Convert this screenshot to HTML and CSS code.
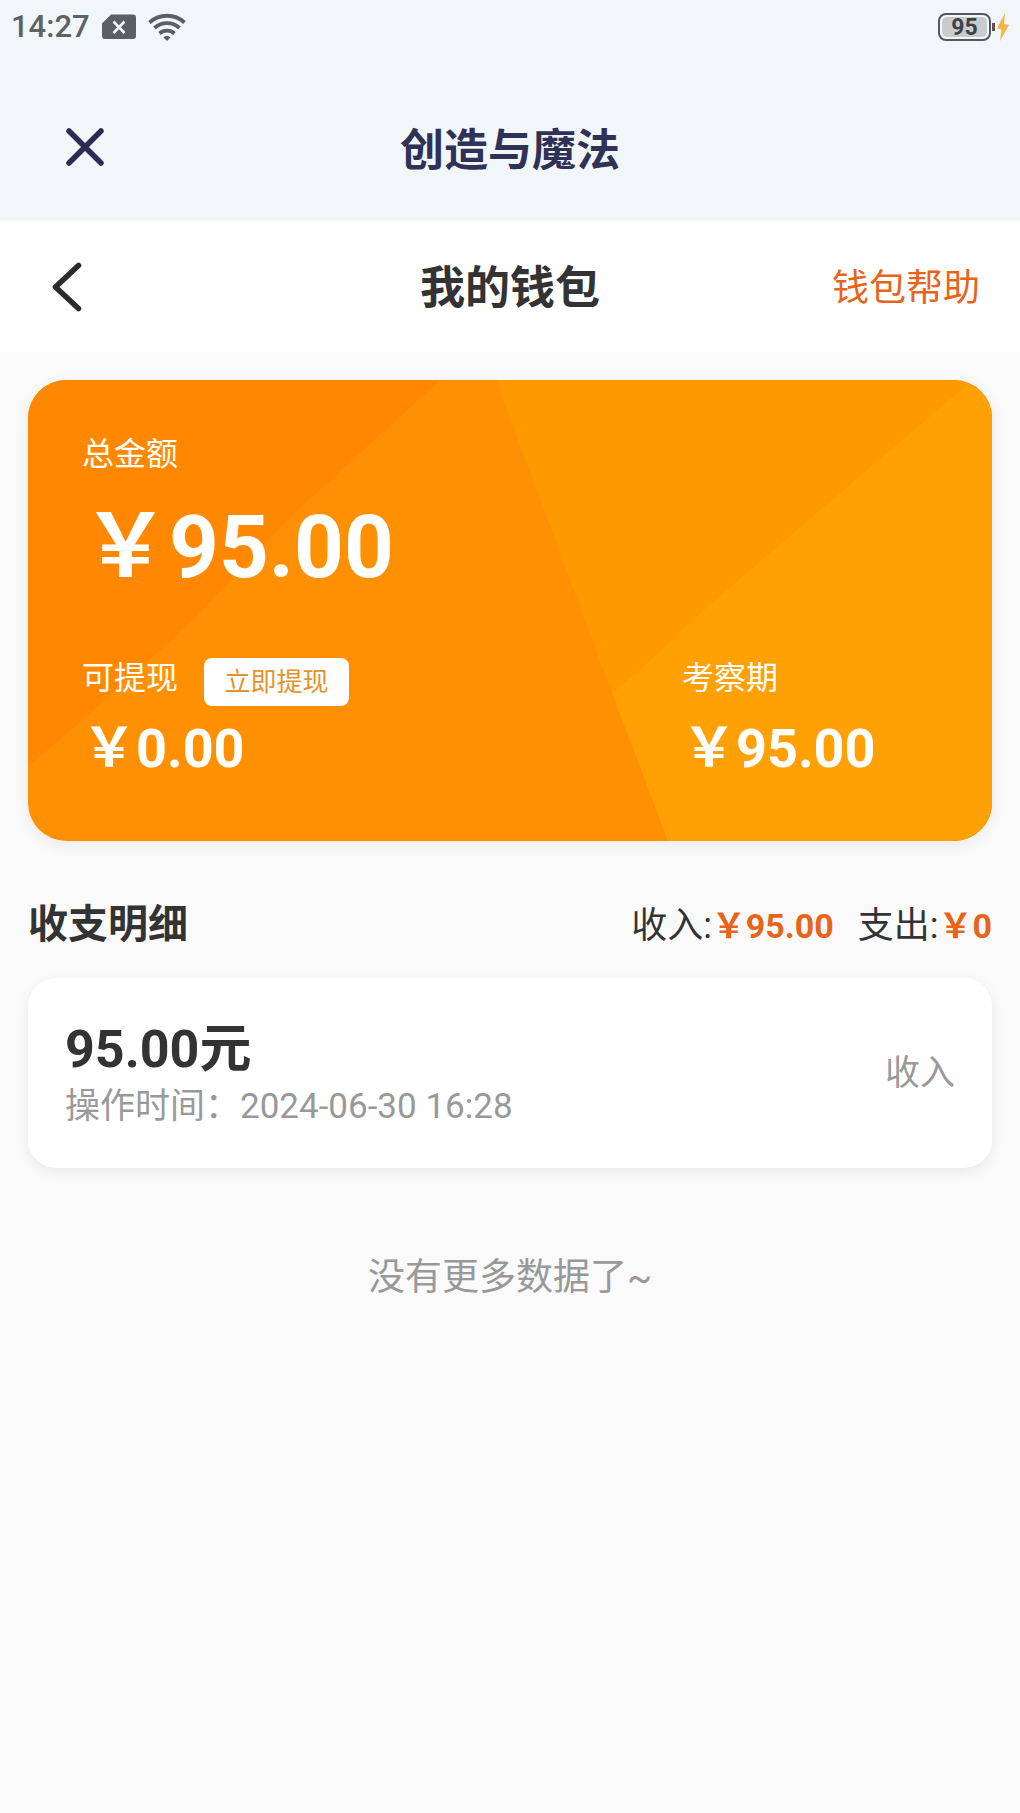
FILE: index.html
```html
<!DOCTYPE html>
<html lang="zh-CN">
<head>
<meta charset="utf-8">
<meta name="viewport" content="width=device-width, initial-scale=1">
<title>我的钱包</title>
<link rel="stylesheet" href="styles.css">
</head>
<body>
<div class="status">
  <div class="status-left">
    <span class="clock">14:27</span>
    <svg class="sim" viewBox="0 0 34 26" aria-hidden="true">
      <path d="M9 0.500H31a3 3 0 0 1 3 3V22a3 3 0 0 1-3 3H3a3 3 0 0 1-3-3V9.500Z" fill="#5c5f62"/>
      <path d="M11.500 7.500 22.500 19M22.500 7.500 11.500 19" stroke="#f1f6f9" stroke-width="2.600"/>
    </svg>
    <svg class="wifi" viewBox="0 0 38 28" aria-hidden="true">
      <g fill="none" stroke="#5c5f62" stroke-width="3.800">
        <path d="M1.500 9.500a26 26 0 0 1 35 0"/>
        <path d="M6.500 15a18.500 18.500 0 0 1 25 0"/>
        <path d="M11.500 20.500a11.500 11.500 0 0 1 15 0"/>
      </g>
      <path d="M15.500 24.500a4.500 4.500 0 0 1 7 0L19 28Z" fill="#5c5f62"/>
    </svg>
  </div>
  <div class="status-right">
    <span class="battery"><span class="battery-level">95</span></span>
    <span class="battery-tip"></span>
    <svg class="bolt" viewBox="0 0 12 30" aria-hidden="true"><path d="M8 1 0 16.500l4.500 1L3 29 12 13 7 12Z" fill="#f6b443"/></svg>
  </div>
</div>
<header class="appbar">
  <button class="icon-button close" type="button" aria-label="关闭">
    <svg viewBox="0 0 40 40" aria-hidden="true"><path d="M4 4 36 36M36 4 4 36" stroke="#2d2b55" stroke-width="5.500" stroke-linecap="round"/></svg>
  </button>
  <h1>创造与魔法</h1>
</header>
<nav class="navbar">
  <button class="icon-button back" type="button" aria-label="返回">
    <svg viewBox="0 0 30 50" aria-hidden="true"><path d="M26.500 3.500 3.500 25 26.500 46.500" fill="none" stroke="#2b2b2d" stroke-width="5.500" stroke-linecap="round" stroke-linejoin="round"/></svg>
  </button>
  <h2>我的钱包</h2>
  <a class="help" href="#">钱包帮助</a>
</nav>
<main>
  <section class="wallet">
    <svg class="facets" viewBox="0 0 964 461" preserveAspectRatio="none" aria-hidden="true">
      <path d="M0 0H964V461H0Z" fill="#ff9003"/>
      <path d="M0 0H412L259 140 165 240Q90 310 0 387Z" fill="#ff8800"/>
      <path d="M468 0H964V461H640L584 313Z" fill="#ff9900"/>
      <path d="M964 0H945L908 31 664 240Q620 285 584 313L640 461H964Z" fill="#ffa005"/>
    </svg>
    <div class="total">
      <p class="label">总金额</p>
      <p class="total-value">￥95.00</p>
    </div>
    <div class="split">
      <div class="part">
        <div class="part-head"><span class="label">可提现</span><button class="withdraw" type="button">立即提现</button></div>
        <p class="part-value">￥0.00</p>
      </div>
      <div class="part">
        <div class="part-head"><span class="label">考察期</span></div>
        <p class="part-value">￥95.00</p>
      </div>
    </div>
  </section>
  <section>
    <div class="details-head">
      <h3>收支明细</h3>
      <div class="sums">
        <span>收入:<b>￥95.00</b></span>
        <span>支出:<b>￥0</b></span>
      </div>
    </div>
    <ul class="records">
      <li class="record">
        <div>
          <p class="amount">95.00元</p>
          <p class="time">操作时间：2024-06-30 16:28</p>
        </div>
        <span class="kind">收入</span>
      </li>
    </ul>
    <p class="end">没有更多数据了~</p>
  </section>
</main>
</body>
</html>
```
FILE: styles.css
```css
* { box-sizing: border-box; }
body {
  margin: 0;
  min-height: 100vh;
  background: #fafafa;
  color: #333;
  font-family: Roboto, "Noto Sans CJK SC", sans-serif;
}
h1, h2, h3, p, ul { margin: 0; padding: 0; }
h1, h2, h3 { font-weight: 700; }
button { border: 0; padding: 0; background: none; font: inherit; color: inherit; }
svg { display: block; }

.status {
  display: flex;
  justify-content: space-between;
  align-items: center;
  height: 53px;
  padding: 0 11px;
  background: #f1f6f9;
}
.status-left, .status-right { display: flex; align-items: center; }
.status-left { gap: 12px; }
.clock { font-size: 31px; font-weight: 500; line-height: 36px; color: #5f6265; }
.sim { width: 34px; height: 26px; }
.wifi { width: 38px; height: 28px; }
.battery {
  display: flex;
  width: 53px;
  height: 28px;
  padding: 2px;
  border: 2px solid #55585b;
  border-radius: 8px;
}
.battery-level {
  flex: 1;
  border-radius: 5px;
  background: #c9cccd;
  color: #3f4245;
  font-size: 23px;
  font-weight: 700;
  line-height: 22px;
  text-align: center;
}
.battery-tip { width: 3px; height: 8px; margin: 0 2px 0 1px; background: #5d5156; }
.bolt { width: 12px; height: 30px; }

.appbar, .navbar {
  display: grid;
  grid-template-columns: 1fr auto 1fr;
  align-items: center;
}
.appbar {
  height: 168px;
  padding: 24px 65px 0;
  background: #f1f6f9;
}
.icon-button { justify-self: start; }
.close { width: 40px; height: 40px; margin-bottom: 4px; }
.appbar h1 { padding-top: 4px; font-size: 44px; line-height: 64px; color: #2f3157; }
.navbar {
  height: 131px;
  padding: 0 40px;
  background: #fff;
}
.back { height: 50px; padding-left: 12px; }
.back svg { width: 30px; height: 50px; }
.navbar h2 { padding-top: 4px; font-size: 45px; line-height: 64px; color: #333; }
.help { justify-self: end; padding-top: 4px; font-size: 37px; line-height: 48px; color: #e8641b; text-decoration: none; }

main { padding: 28px; }
.wallet {
  position: relative;
  overflow: hidden;
  padding: 50px 54px 57px;
  border-radius: 38px;
  color: #fff;
  box-shadow: 0 4px 16px #00000012;
}
.facets { position: absolute; inset: 0; width: 100%; height: 100%; }
.total, .split { position: relative; }
.label { font-size: 32px; line-height: 48px; }
.total-value { font-size: 87px; font-weight: 700; line-height: 138px; }
.split { display: grid; grid-template-columns: 600px 1fr; padding-top: 38px; }
.part-head { display: flex; gap: 26px; height: 60px; }
.withdraw {
  width: 145px;
  height: 48px;
  margin-top: 4px;
  border-radius: 8px;
  background: #fff;
  color: #e2932c;
  font-size: 26px;
  line-height: 48px;
}
.part-value { font-size: 54px; font-weight: 700; line-height: 70px; }

.details-head {
  display: flex;
  justify-content: space-between;
  align-items: center;
  padding: 54px 0 23px;
}
.details-head h3 { font-size: 40px; line-height: 60px; }
.sums { display: flex; gap: 24px; padding-top: 2px; font-size: 36px; line-height: 56px; }
.sums b { font-size: 34px; color: #e8641b; }
.records { list-style: none; }
.record {
  display: flex;
  justify-content: space-between;
  align-items: center;
  padding: 39px 37px 37px;
  border-radius: 28px;
  background: #fff;
  box-shadow: 0 4px 14px #00000012;
}
.amount { font-size: 52px; font-weight: 700; line-height: 66px; }
.time, .kind { font-size: 35px; line-height: 48px; color: #999; }
.end { padding-top: 80px; font-size: 37px; line-height: 60px; text-align: center; color: #999; }
```
